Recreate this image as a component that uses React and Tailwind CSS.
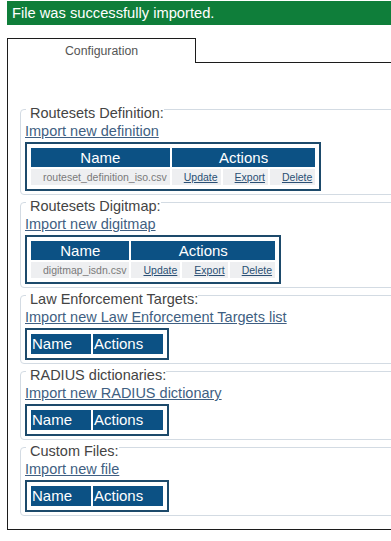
import React from "react";

const sections = [
  {
    title: "Routesets Definition:",
    link: "Import new definition",
    files: ["routeset_definition_iso.csv"],
  },
  {
    title: "Routesets Digitmap:",
    link: "Import new digitmap",
    files: ["digitmap_isdn.csv"],
  },
  {
    title: "Law Enforcement Targets:",
    link: "Import new Law Enforcement Targets list",
    files: [],
  },
  {
    title: "RADIUS dictionaries:",
    link: "Import new RADIUS dictionary",
    files: [],
  },
  {
    title: "Custom Files:",
    link: "Import new file",
    files: [],
  },
];

function FileTable({ files }) {
  // empty tables keep the narrow fixed header, filled ones centre it
  if (files.length === 0) {
    return (
      <div className="w-fit border-2 border-[#1d4a6b] p-[2px]">
        <table className="border-separate border-spacing-[2px]">
          <thead>
            <tr>
              <th className="w-[60px] h-[20px] bg-[#0c5184] text-white font-normal text-[15px] leading-[20px] text-left p-0 pl-[1px]">
                Name
              </th>
              <th className="w-[70px] h-[20px] bg-[#0c5184] text-white font-normal text-[15px] leading-[20px] text-left p-0 pl-[1px]">
                Actions
              </th>
            </tr>
          </thead>
        </table>
      </div>
    );
  }

  return (
    <div className="w-fit border-2 border-[#1d4a6b] p-[2px]">
      <table className="border-separate border-spacing-[2px]">
        <thead>
          <tr>
            <th className="h-[19px] bg-[#0c5184] text-white font-normal text-[15px] leading-[19px] text-center p-0">
              Name
            </th>
            <th
              colSpan={3}
              className="h-[19px] bg-[#0c5184] text-white font-normal text-[15px] leading-[19px] text-center p-0"
            >
              Actions
            </th>
          </tr>
        </thead>
        <tbody>
          {files.map((f) => (
            <tr key={f}>
              <td className="h-[16px] bg-[#eeeff1] text-[#7a7a7a] text-[10.5px] leading-[16px] p-0 pl-[12px] pr-[3px] whitespace-nowrap">
                {f}
              </td>
              {["Update", "Export", "Delete"].map((a) => (
                <td
                  key={a}
                  className="h-[16px] bg-[#eeeff1] text-[10.5px] leading-[16px] p-0 pl-[12px] pr-[3px] whitespace-nowrap"
                >
                  <a href="#" className="text-[#2a4f74] underline">
                    {a}
                  </a>
                </td>
              ))}
            </tr>
          ))}
        </tbody>
      </table>
    </div>
  );
}

function Section({ title, link, files }) {
  return (
    <fieldset className="block border border-[#d3dbe3] rounded-[4px] pl-[4px] pb-[3px] mt-[3px] first:mt-0">
      <legend className="ml-[1px] pl-[4px] h-[9px] leading-[17px] text-[14.5px] text-[#444]">
        {title}
      </legend>
      <div className="pt-[9px] leading-[17px] text-[14.5px]">
        <a href="#" className="text-[#3f5f82] underline">
          {link}
        </a>
      </div>
      <div className="mt-[2px]">
        <FileTable files={files} />
      </div>
    </fieldset>
  );
}

export default function App() {
  return (
    <div className="w-[391px] h-[541px] overflow-hidden bg-white font-['Liberation_Sans',Arial,sans-serif]">
      <div className="ml-[7px] mt-[1px] w-[420px] h-[24px] bg-[#0f7e3a] text-white text-[14.7px] leading-[24px] pl-[5px]">
        File was successfully imported.
      </div>

      <div className="ml-[7px] mt-[13px] w-[460px]">
        <div className="flex">
          <div className="w-[189px] h-[25px] border border-b-0 border-[#1c1c1c] flex items-center justify-center text-[12.3px] text-[#555]">
            Configuration
          </div>
          <div className="flex-1 h-[25px] border-b border-[#1c1c1c]" />
        </div>

        <div className="border-l border-b border-[#1c1c1c] pl-[12px] pt-[42px] pb-[13px]">
          {sections.map((s) => (
            <Section key={s.title} {...s} />
          ))}
        </div>
      </div>
    </div>
  );
}
